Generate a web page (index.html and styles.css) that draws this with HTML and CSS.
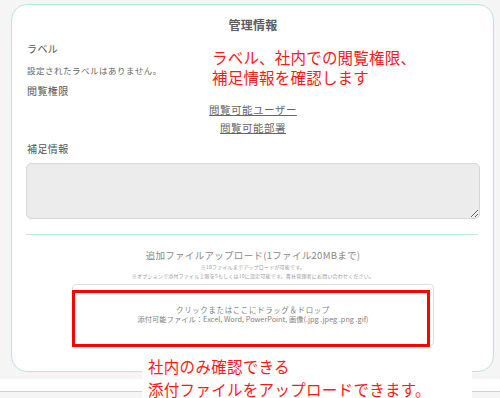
FILE: index.html
```html
<!DOCTYPE html>
<html lang="ja">
<head>
  <meta charset="UTF-8">
  <title>管理情報</title>
  <link rel="stylesheet" href="styles.css">
</head>
<body>
  <div class="page">
    <section class="card">
      <h2 class="card-title">管理情報</h2>

      <div class="field-label first">ラベル</div>
      <p class="empty-note">設定されたラベルはありません。</p>

      <div class="field-label">閲覧権限</div>
      <div class="perm-links">
        <a href="#">閲覧可能ユーザー</a>
        <a href="#">閲覧可能部署</a>
      </div>

      <div class="field-label note-label">補足情報</div>
      <textarea class="note-box" readonly></textarea>

      <hr class="divider">

      <div class="upload-title">追加ファイルアップロード(1ファイル20MBまで)</div>
      <p class="upload-hint">※10ファイルまでアップロードが可能です。</p>
      <p class="upload-hint">※オプションで添付ファイル上限を5もしくは10に設定可能です。貴社管理者にお問い合わせください。</p>

      <div class="dropzone">
        <p class="drop-main">クリックまたはここにドラッグ＆ドロップ</p>
        <p class="drop-types">添付可能ファイル：Excel, Word, PowerPoint, 画像(.jpg .jpeg .png .gif)</p>
      </div>
    </section>
    <div class="below-strip"></div>
    <div class="next-bar"></div>
  </div>

  <!-- annotations laid over the screenshot -->
  <div class="note note-top">ラベル、社内での閲覧権限、<br>補足情報を確認します</div>
  <div class="red-frame"></div>
  <div class="note note-bottom">社内のみ確認できる<br>添付ファイルをアップロードできます。</div>
</body>
</html>
```

FILE: styles.css
```css
body {
  margin: 0;
  background: #f5f5f5;
  font-family: "Noto Sans CJK JP", "Noto Sans", sans-serif;
  color: #555;
  width: 500px;
  height: 398px;
  overflow: hidden;
  position: relative;
}
p {
  margin: 0;
}
.page {
  padding-top: 4px;
}
.card {
  margin-left: 11px;
  width: 483px;
  box-sizing: border-box;
  background: #fff;
  border: 1px solid #bde2e4;
  border-radius: 16px;
  padding: 12px 13px 25px 14px;
}
.card-title {
  margin: 0;
  font-size: 12px;
  line-height: 16px;
  font-weight: 700;
  text-align: center;
  letter-spacing: 0.3px;
  color: #5c5c5c;
}
.field-label {
  font-size: 10px;
  line-height: 16px;
  letter-spacing: 0.4px;
  margin: 7px 0 0 1px;
  color: #555;
}
.field-label.first {
  margin-top: 8px;
}
.empty-note {
  font-size: 8.5px;
  line-height: 12px;
  letter-spacing: 0.5px;
  margin: 7px 0 0 1px;
  color: #666;
}
.perm-links {
  display: flex;
  flex-direction: column;
  align-items: center;
  gap: 2px;
  margin-top: 3px;
}
.perm-links a {
  font-size: 10.5px;
  line-height: 16px;
  letter-spacing: 0.5px;
  color: #666;
  text-decoration: underline;
}
.field-label.note-label {
  margin-top: 5px;
}
.note-box {
  display: block;
  margin-top: 6px;
  width: 454px;
  height: 56px;
  box-sizing: border-box;
  background: #ececec;
  border: 1px solid #d8d8d8;
  border-radius: 5px;
  padding: 6px;
  resize: vertical;
  outline: none;
}
.divider {
  margin: 15px 2px 0 0;
  border: 0;
  border-top: 1px solid #bfe5e6;
}
.upload-title {
  margin-top: 13px;
  font-size: 9.5px;
  line-height: 14px;
  letter-spacing: 0.3px;
  text-align: center;
  color: #888;
}
.upload-hint {
  font-size: 5px;
  line-height: 9px;
  text-align: center;
  color: #999;
  letter-spacing: 0.2px;
}
.upload-hint:first-of-type {
  margin-top: 1.5px;
}
.dropzone {
  width: 362px;
  height: 62px;
  box-sizing: border-box;
  margin: 3.5px auto 0;
  border: 1px solid #dedede;
  border-radius: 4px;
  display: flex;
  flex-direction: column;
  justify-content: center;
  align-items: center;
  color: #808080;
}
.drop-main {
  font-size: 7.5px;
  line-height: 9.5px;
  letter-spacing: 0.6px;
}
.drop-types {
  font-size: 7.3px;
  line-height: 9.5px;
  letter-spacing: 0px;
}
.below-strip {
  height: 7px;
}
.next-bar {
  height: 12px;
  background: #fff;
  border-bottom: 1px solid #cfcfcf;
}
.note {
  position: absolute;
  color: #ff1a1a;
  font-size: 15.5px;
  line-height: 20px;
  letter-spacing: 0.2px;
}
.note-top {
  left: 212px;
  top: 47px;
}
.note-bottom {
  left: 142px;
  top: 355px;
  width: 330px;
  height: 43px;
  box-sizing: border-box;
  padding-left: 6px;
  background: #fff;
  line-height: 22.5px;
  letter-spacing: 0.3px;
}
.red-frame {
  position: absolute;
  left: 72px;
  top: 290px;
  width: 358px;
  height: 57px;
  box-sizing: border-box;
  border: 3px solid #ff0000;
}
```
